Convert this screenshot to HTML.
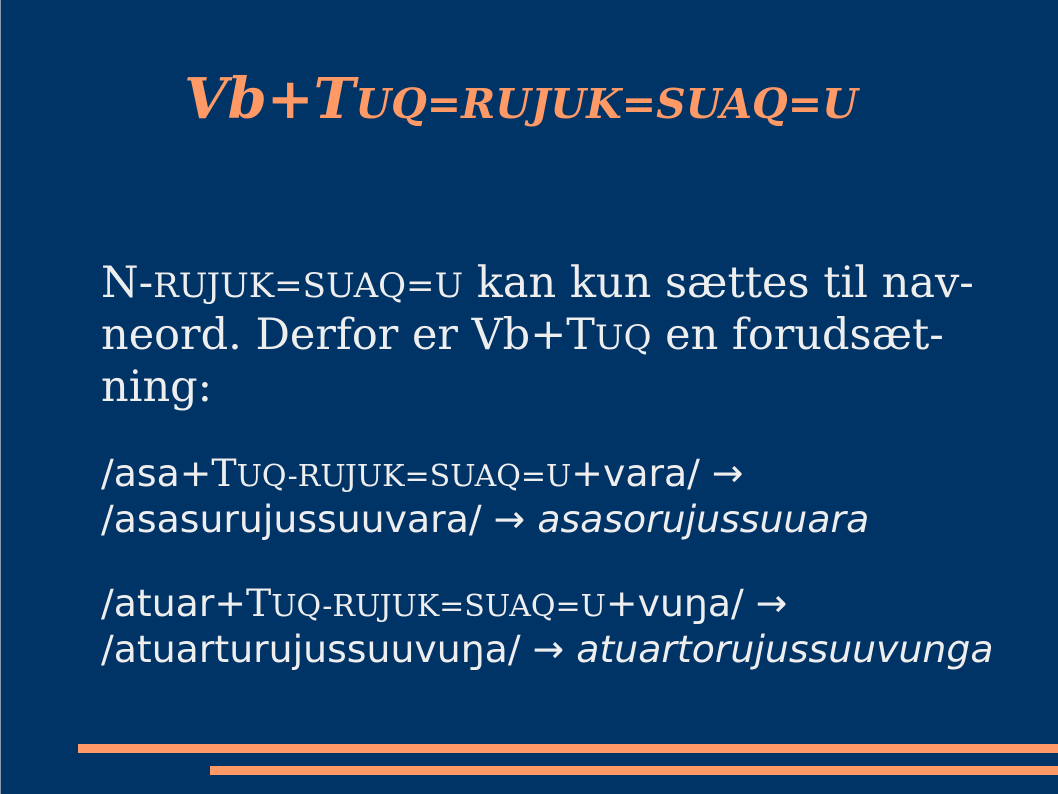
<!DOCTYPE html>
<html><head><meta charset="utf-8"><style>
html,body{margin:0;padding:0}
body{width:1058px;height:794px;background:#003366;position:relative;overflow:hidden;border-left:1px solid #8899aa;box-sizing:border-box}
.t{position:absolute;left:0;width:1040px;text-align:center;top:67px;font-family:"DejaVu Serif",serif;font-weight:bold;font-style:italic;color:#ff9966;font-size:56px;line-height:64px;white-space:nowrap}
.t .s{font-size:41px}
.p{position:absolute;left:100px;top:259px;font-family:"DejaVu Serif",serif;color:#eeeeee;font-size:43px;line-height:49px;width:950px;white-space:nowrap}
.p .s{font-size:34px}
.q{position:absolute;left:100px;font-family:"DejaVu Sans",sans-serif;color:#eeeeee;font-size:37.8px;line-height:43px;white-space:nowrap}
.q .sf{font-family:"DejaVu Serif",serif}
.q .s{font-size:30px}
.q i{font-style:oblique}
.b{position:absolute;background:#ff9966;right:0;height:9px}
</style></head><body>
<div class="t">Vb+T<span class="s">UQ=RUJUK=SUAQ=U</span></div>
<div class="p">N-<span class="s">RUJUK=SUAQ=U</span> kan kun sættes til nav-<br>neord. Derfor er Vb+T<span class="s">UQ</span> en forudsæt-<br>ning:</div>
<div class="q" style="top:452px">/asa+<span class="sf">T<span class="s">UQ-RUJUK=SUAQ=U</span></span>+vara/ →<br>/asasurujussuuvara/ → <i>asasorujussuuara</i></div>
<div class="q" style="top:582px">/atuar+<span class="sf">T<span class="s">UQ-RUJUK=SUAQ=U</span></span>+vuŋa/ →<br>/atuarturujussuuvuŋa/ → <i>atuartorujussuuvunga</i></div>
<div class="b" style="left:77px;top:744px"></div>
<div class="b" style="left:209px;top:766px"></div>
</body></html>
